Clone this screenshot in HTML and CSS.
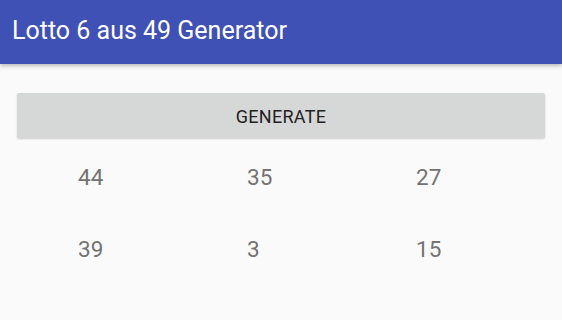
FILE: index.html
```html
<!DOCTYPE html>
<html>
<head>
<meta charset="utf-8">
<link rel="stylesheet" href="styles.css">
</head>
<body>
<header class="toolbar">
  <h1 class="title">Lotto 6 aus 49 Generator</h1>
</header>
<main class="content">
  <button class="generate">GENERATE</button>
  <div class="numbers">
    <span class="num">44</span>
    <span class="num">35</span>
    <span class="num">27</span>
    <span class="num">39</span>
    <span class="num">3</span>
    <span class="num">15</span>
  </div>
</main>
</body>
</html>
```
FILE: styles.css
```css
html, body {
  margin: 0;
  padding: 0;
  background: #fafafa;
  font-family: Roboto, "Noto Sans", sans-serif;
  width: 562px;
  height: 320px;
  overflow: hidden;
}
.toolbar {
  height: 64px;
  background: #3f51b5;
  box-shadow: 0 2px 4px rgba(0,0,0,0.25);
  display: flex;
  align-items: center;
  padding-left: 12px;
  position: relative;
}
.title {
  margin: 0;
  color: #ffffff;
  font-weight: 400;
  font-size: 25px;
  line-height: 28px;
  margin-top: -3px;
  letter-spacing: 0;
}
.content {
  padding: 29px 17px 0 17px;
}
.generate {
  display: block;
  width: 528px;
  height: 45px;
  margin: 0;
  border: none;
  border-radius: 2px;
  background: #d6d7d7;
  box-shadow: 0 1px 2px rgba(0,0,0,0.18);
  font-family: Roboto, "Noto Sans", sans-serif;
  font-size: 18px;
  color: #222222;
  padding: 1px 0 0 0;
  letter-spacing: 0.3px;
}
.numbers {
  display: grid;
  grid-template-columns: 169px 169px 169px;
  grid-auto-rows: 71.5px;
  padding-left: 61px;
  padding-top: 26px;
}
.num {
  font-size: 22.5px;
  line-height: 26px;
  color: #737373;
}
```
